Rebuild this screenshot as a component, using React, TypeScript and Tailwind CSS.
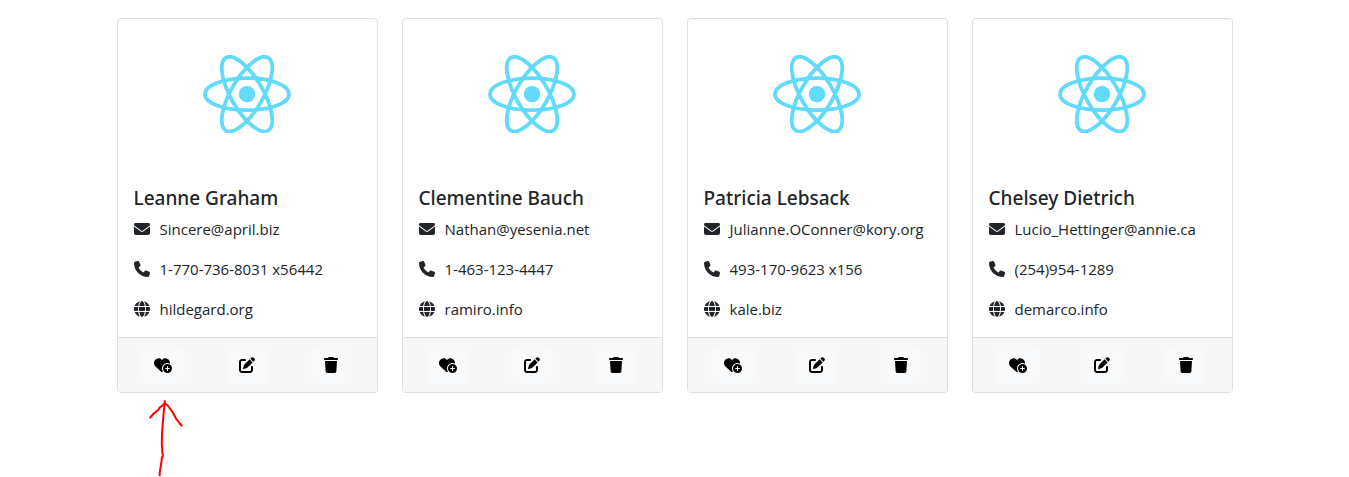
import React from "react";
import {
  FaEnvelope,
  FaGlobe,
  FaHeartCirclePlus,
  FaPenToSquare,
  FaPhone,
  FaTrash,
} from "react-icons/fa6";

type User = { name: string; email: string; phone: string; website: string };

const users: User[] = [
  { name: "Leanne Graham", email: "Sincere@april.biz", phone: "1-770-736-8031 x56442", website: "hildegard.org" },
  { name: "Clementine Bauch", email: "Nathan@yesenia.net", phone: "1-463-123-4447", website: "ramiro.info" },
  { name: "Patricia Lebsack", email: "Julianne.OConner@kory.org", phone: "493-170-9623 x156", website: "kale.biz" },
  { name: "Chelsey Dietrich", email: "Lucio_Hettinger@annie.ca", phone: "(254)954-1289", website: "demarco.info" },
];

function ReactLogo() {
  return (
    <svg viewBox="-11.5 -10.23 23 20.46" className="w-[88px] text-[#61dafb]" role="img" aria-label="React logo">
      <circle r="2.14" fill="currentColor" />
      <g fill="none" stroke="currentColor" strokeWidth="1">
        <ellipse rx="11" ry="4.2" />
        <ellipse rx="11" ry="4.2" transform="rotate(60)" />
        <ellipse rx="11" ry="4.2" transform="rotate(120)" />
      </g>
    </svg>
  );
}

function Arrow() {
  return (
    <div className="pointer-events-none absolute top-full left-[31px] z-10 h-[84px] w-9">
      <svg
        viewBox="0 0 36 84"
        width="36"
        height="84"
        fill="none"
        stroke="#ff0000"
        strokeWidth="2"
        strokeLinecap="round"
        strokeLinejoin="round"
        aria-hidden="true"
      >
        <path d="M15.8 9 L14.3 25 L13 42 L12.8 52 L13.5 62 L14 63.5 L12.8 66 L12.3 71 L10.8 80 L10.6 84" />
        <path d="M1.2 25.5 L4.8 21.5 L7.8 19 L9.3 18 L10.8 15.5 L15.8 11.5 L18.3 13 L23.8 20.5 L27.3 27 L30.8 31.5 L32.6 33.5" />
      </svg>
    </div>
  );
}

function Detail({ icon, text }: { icon: React.ReactNode; text: string }) {
  return (
    <p className="flex items-center gap-[10px] text-[15px] leading-6 whitespace-nowrap">
      {icon}
      <span>{text}</span>
    </p>
  );
}

function Action({ label, children }: { label: string; children: React.ReactNode }) {
  return (
    <button
      type="button"
      aria-label={label}
      className="flex h-[38px] cursor-pointer items-center justify-center rounded-md bg-[#f8f9fa] px-[13px] text-black hover:bg-[#d3d4d5]"
    >
      {children}
    </button>
  );
}

function UserCard({ user, marked }: { user: User; marked: boolean }) {
  return (
    <article className="relative rounded border border-[#dfdfdf] bg-white">
      <div className="flex h-[150px] items-center justify-center">
        <ReactLogo />
      </div>
      <div className="px-4 pt-[17px] pb-4">
        <h5 className="mb-[7px] font-['Noto_Sans','Open_Sans',sans-serif] text-[19px] leading-6 font-medium">{user.name}</h5>
        <div className="flex flex-col gap-4">
          <Detail icon={<FaEnvelope className="size-4" />} text={user.email} />
          <Detail icon={<FaPhone className="size-4" />} text={user.phone} />
          <Detail icon={<FaGlobe className="size-4" />} text={user.website} />
        </div>
      </div>
      <footer className="grid grid-cols-3 justify-items-center rounded-b-[3px] border-t border-[#dfdfdf] bg-[#f7f7f7] px-1 py-2">
        <Action label="Add to favourites">
          <FaHeartCirclePlus className="h-4 w-[18px]" />
        </Action>
        <Action label="Edit">
          <FaPenToSquare className="size-4" />
        </Action>
        <Action label="Delete">
          <FaTrash className="h-4 w-[14px]" />
        </Action>
      </footer>
      {marked && <Arrow />}
    </article>
  );
}

export default function App() {
  return (
    <div className="min-h-screen bg-white font-['Open_Sans',sans-serif] text-[#212529]">
      <main className="mx-auto max-w-[1140px] px-3 pt-[18px]">
        <div className="grid grid-cols-1 gap-6 sm:grid-cols-2 lg:grid-cols-4">
          {users.map((user, index) => (
            <UserCard key={user.name} user={user} marked={index === 0} />
          ))}
        </div>
      </main>
    </div>
  );
}
